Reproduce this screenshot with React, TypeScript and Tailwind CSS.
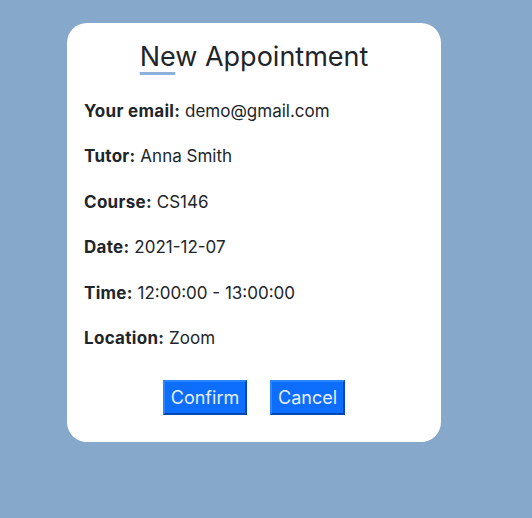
const rows: { label: string; value: string }[] = [
  { label: "Your email:", value: "demo@gmail.com" },
  { label: "Tutor:", value: "Anna Smith" },
  { label: "Course:", value: "CS146" },
  { label: "Date:", value: "2021-12-07" },
  { label: "Time:", value: "12:00:00 - 13:00:00" },
  { label: "Location:", value: "Zoom" },
];

export default function App() {
  return (
    <div className="min-h-[518px] w-[532px] bg-[#86a8ca] pt-[23px] pl-[67px] font-['Inter',sans-serif] text-[#212529]">
      <div className="flex w-[374px] flex-col rounded-[20px] bg-white px-[17px] pt-[18px] pb-[27px]">
        <h2 className="text-center text-[27px] leading-[32px] font-normal">
          <span className="underline decoration-[#8eb1db] decoration-[3px] underline-offset-[6px]">
            Ne
          </span>
          w Appointment
        </h2>
        <div className="mt-[26px] flex flex-col gap-[21.4px]">
          {rows.map((row, i) => (
            <p key={i} className="text-[17px] leading-[24px]">
              <span className="font-bold tracking-[0.3px]">{row.label}</span> {row.value}
            </p>
          ))}
        </div>
        <div className="mt-[30px] flex justify-center gap-[23px]">
          <button className="h-[35px] w-[84px] border-2 border-t-[#2a85ff] border-l-[#2a85ff] border-r-[#0047b3] border-b-[#0047b3] bg-[#0d6efd] text-[18px] text-[#e6efff]">
            Confirm
          </button>
          <button className="h-[35px] w-[75px] border-2 border-t-[#2a85ff] border-l-[#2a85ff] border-r-[#0047b3] border-b-[#0047b3] bg-[#0d6efd] text-[18px] text-[#e6efff]">
            Cancel
          </button>
        </div>
      </div>
    </div>
  );
}
